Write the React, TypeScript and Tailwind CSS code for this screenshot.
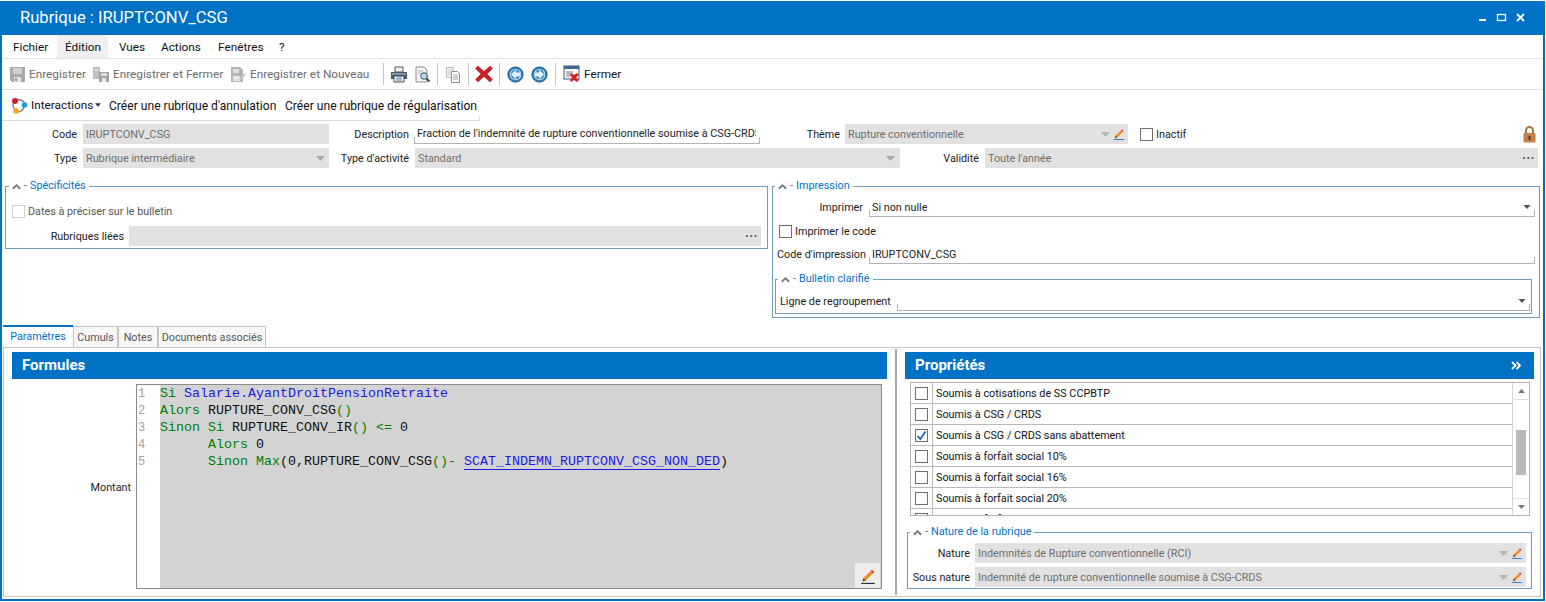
import React from "react";

const Floppy = () => (
  <svg width="17" height="17" viewBox="0 0 17 17"><path d="M1 1h15v15H3l-2-2z" fill="#a9a9a9" /><rect x="4" y="2" width="9" height="6" fill="#cfcfcf" /><rect x="5" y="11" width="7" height="5" fill="#e4e4e4" /><rect x="6" y="12" width="2" height="3" fill="#9a9a9a" /></svg>
);
const FloppyDoc = () => (
  <svg width="18" height="17" viewBox="0 0 18 17"><rect x="1" y="1" width="7" height="12" fill="#bdbdbd" /><rect x="3" y="3" width="3" height="2" fill="#e2e2e2" /><path d="M7 6h10v10H7z" fill="#a3a3a3" /><rect x="9" y="7" width="6" height="3" fill="#dcdcdc" /><rect x="10" y="12" width="4" height="4" fill="#e6e6e6" /></svg>
);
const FloppyNew = () => (
  <svg width="18" height="17" viewBox="0 0 18 17"><path d="M2 1h9l3 3v12H2z" fill="#b4b4b4" /><rect x="4" y="3" width="6" height="4" fill="#dedede" /><rect x="4" y="10" width="7" height="5" fill="#e8e8e8" /><path d="M11 12l5-5 1 1-5 6h-2z" fill="#c8c8c8" /></svg>
);
const Printer = () => (
  <svg width="18" height="17" viewBox="0 0 18 17"><path d="M5 1h8v5H5z" fill="#f4f4f4" stroke="#555" /><path d="M1 6h16v7H1z" fill="#4f5a65" /><rect x="2" y="7" width="14" height="2" fill="#7d95aa" /><path d="M4 10h10v6H4z" fill="#fff" stroke="#445" /><path d="M6 12h6M6 14h6" stroke="#2f7fc0" /></svg>
);
const Preview = () => (
  <svg width="17" height="17" viewBox="0 0 17 17"><path d="M2 1h8l3 3v12H2z" fill="#f3f3f3" stroke="#8a8a8a" /><path d="M4 5h5M4 7h3" stroke="#b5b5b5" /><circle cx="10" cy="10" r="3.2" fill="#b9dcf3" stroke="#5d6f7d" strokeWidth="1.2" /><path d="M12.5 12.5l3 3" stroke="#394650" strokeWidth="2" /></svg>
);
const CopyDoc = () => (
  <svg width="17" height="17" viewBox="0 0 17 17"><path d="M1.5 1.5h7v10h-7z" fill="#f0f0f0" stroke="#bdbdbd" /><path d="M3 4h4M3 6h4M3 8h4" stroke="#d0d0d0" /><path d="M6.5 5.5h6l2 2v9h-8z" fill="#fff" stroke="#8f8f8f" /><path d="M8 9h5M8 11h5M8 13h5" stroke="#a5a5a5" /></svg>
);
const RedX = () => (
  <svg width="18" height="18" viewBox="0 0 18 18"><path d="M3 1l6 5.5L15 1l2.5 2.5L12 9l5.5 5.5L15 17l-6-5.5L3 17 .5 14.5 6 9 .5 3.5z" fill="#cf1f25" stroke="#a8151a" strokeWidth="0.5" /></svg>
);
const Arrow = ({ right }: { right?: boolean }) => (
  <svg width="17" height="17" viewBox="0 0 17 17"><circle cx="8.5" cy="8.5" r="7.6" fill="#2a77b5" stroke="#1b5d93" /><circle cx="8.5" cy="8.5" r="5.8" fill="#dcecf8" /><circle cx="8.5" cy="8.5" r="5" fill="#3f90cc" />{right ? <path d="M4 6.5h4V3.8l5 4.7-5 4.7v-2.7H4z" fill="#e6f1fa" /> : <path d="M13 6.5H9V3.8L4 8.5l5 4.7v-2.7h4z" fill="#e6f1fa" />}</svg>
);
const CloseWin = () => (
  <svg width="18" height="18" viewBox="0 0 18 18"><rect x="1" y="1" width="15" height="13" fill="#fff" stroke="#3c5a78" /><rect x="1" y="1" width="15" height="3" fill="#3c6a97" /><path d="M3 7h7M3 9h5M3 11h4" stroke="#777" /><path d="M8 8l3 2 3-2 2 2-3 2.5 3 2.5-2 2-3-2-3 2-1-2 2-2.5-2-2.5z" fill="#d3262b" /></svg>
);
const Interactions = () => (
  <svg width="17" height="17" viewBox="0 0 17 17"><path d="M4 4C8 1 14 4 14 8M13 10c-1 4-5 6-8 4M4 12C1 10 2 7 3 5" fill="none" stroke="#6b7280" strokeWidth="1.2" /><circle cx="4" cy="4" r="3" fill="#d5212e" /><circle cx="13.5" cy="8" r="2.8" fill="#1f9fd8" /><circle cx="5" cy="14" r="2.8" fill="#f0a820" /></svg>
);
const Pencil = ({ line = "#1e6fb5", size = 14 }: { line?: string; size?: number }) => (
  <svg width={size} height={size} viewBox="0 0 14 14"><path d="M3 9l6.5-6.5 2 2L5 11l-2.8.8z" fill="#ee8a1d" /><path d="M9.5 2.500l1-1 2 2-1 1z" fill="#d9333a" /><path d="M2.200 11.800L3 9l2 2z" fill="#6b4a2b" /><rect x="1" y="13" width="12" height="1" fill={line} /></svg>
);
const Lock = () => (
  <svg width="13" height="17" viewBox="0 0 13 17"><path d="M3 7V4.500a3.500 3.500 0 0 1 7 0V7" fill="none" stroke="#a9743f" strokeWidth="2" /><rect x="0.500" y="7" width="12" height="9.500" rx="1" fill="#c0824a" /><rect x="5.500" y="10" width="2" height="4" fill="#5f3c1c" /></svg>
);
const Caret = ({ color = "#a8a8a8", w = 9, h = 5 }: { color?: string; w?: number; h?: number }) => (
  <svg width={w} height={h} viewBox="0 0 9 5"><path d="M0 0h9L4.500 5z" fill={color} /></svg>
);
const Chevron = () => (
  <svg width="9" height="7" viewBox="0 0 10 7"><path d="M1 6l4-4 4 4" fill="none" stroke="#6d7780" strokeWidth="2" /></svg>
);
const Sep = ({ ml }: { ml: string }) => <div className={`h-[22px] w-px bg-[#c4c4c4] ${ml}`} />;
const Dots = () => <span className="text-[#444] text-[12px] leading-[14px] pb-[6px] font-bold tracking-[0.8px]">...</span>;

const GrayField = ({ w, children, right }: { w: string; children?: React.ReactNode; right?: React.ReactNode }) => (
  <div className={`${w} h-5 bg-[#e1e1e1] flex items-center justify-between pl-[3px] pr-[3px] text-[#6e6e6e] shrink-0`}>
    <span className="pt-[2px]">{children}</span>
    {right}
  </div>
);

const LineField = ({ w, children, right, cls = "" }: { w: string; children?: React.ReactNode; right?: React.ReactNode; cls?: string }) => (
  <div className={`${w} ${cls} relative border-b border-[#b4b4b4] flex items-center justify-between pl-[3px] pr-[4px] shrink-0 text-[#222]`}>
    <span className="absolute left-0 bottom-0 h-[6px] w-px bg-[#b4b4b4]" />
    <span className="absolute right-0 bottom-0 h-[6px] w-px bg-[#b4b4b4]" />
    <span className="overflow-hidden pt-[2px]">{children}</span>
    {right}
  </div>
);

const Check = ({ dim, checked }: { dim?: boolean; checked?: boolean }) => (
  <div className={`w-[13px] h-[13px] border bg-white shrink-0 flex items-center justify-center ${dim ? "border-[#cfcfcf]" : "border-[#6f6f6f]"}`}>
    {checked && <svg width="11" height="11" viewBox="0 0 11 11"><path d="M1.500 6l2.800 3L9.500 1.500" fill="none" stroke="#1668b5" strokeWidth="1.800" /></svg>}
  </div>
);

const Legend = ({ children }: { children: React.ReactNode }) => (
  <legend className="ml-[-2px] px-[3px] flex items-center gap-[3px] text-[#0072c6] leading-[14px]">
    <Chevron /><span className="text-[#5d6770]">-</span><span>{children}</span>
  </legend>
);

const Tab = ({ w, children, active }: { w: string; children: React.ReactNode; active?: boolean }) => (
  <div className={`${w} flex items-center justify-center ${active ? "h-[23px] border-t-2 border-[#0072c6] text-[#0072c6] bg-white mb-[-1px]" : "h-[21px] pt-[2px] border border-b-0 border-[#c4c4c4] bg-[#f7f7f7] text-[#555]"}`}>{children}</div>
);

const props = ["Soumis à cotisations de SS CCPBTP", "Soumis à CSG / CRDS", "Soumis à CSG / CRDS sans abattement", "Soumis à forfait social 10%", "Soumis à forfait social 16%", "Soumis à forfait social 20%", "Soumis à forfait social"];

const G = ({ children }: { children: React.ReactNode }) => <span className="text-[#008000]">{children}</span>;
const B = ({ children }: { children: React.ReactNode }) => <span className="text-[#1a1ae0]">{children}</span>;
const K = ({ children }: { children: React.ReactNode }) => <span className="text-[#111]">{children}</span>;

export default function App() {
  return (
    <div className="w-[1546px] h-[602px] pt-px bg-white font-[family-name:Roboto] text-[10.8px] text-[#1c1c1c] whitespace-nowrap overflow-hidden">
      <div className="w-[1545px] h-[600px] border-2 border-t-0 border-[#0072c6] flex flex-col">
        {/* Title */}
        <div className="h-[34px] shrink-0 bg-[#0072c6] flex items-center justify-between text-white pl-[18px] pr-[16px]">
          <span className="text-[16.6px]">Rubrique : IRUPTCONV_CSG</span>
          <svg width="48" height="10" viewBox="0 0 48 10">
            <rect x="0" y="6" width="7" height="2" fill="#fff" />
            <rect x="18.500" y="1.500" width="8" height="6" fill="none" stroke="#fff" strokeWidth="1.300" />
            <path d="M38 1l7 7M45 1l-7 7" stroke="#fff" strokeWidth="1.800" />
          </svg>
        </div>
        {/* Menu */}
        <div className="h-[24px] shrink-0 flex items-center border-b border-[#e4e4e4] text-[#111] text-[11.8px]">
          <span className="ml-[11px] w-[44px] pt-[2px]">Fichier</span>
          <span className="h-[23px] pl-[8px] pt-[2px] w-[51px] bg-[#f0f0f0] flex items-center">Édition</span>
          <span className="ml-[11px] w-[42px] pt-[2px]">Vues</span>
          <span className="w-[57px] pt-[2px]">Actions</span>
          <span className="w-[61px] pt-[2px]">Fenêtres</span>
          <span className="pt-[2px]">?</span>
        </div>
        {/* Toolbar */}
        <div className="h-[31px] shrink-0 flex items-center border-b border-[#e0e0e0] text-[#6c6c6c] text-[11.8px]">
          <div className="ml-[7px] w-[20px]"><Floppy /></div>
          <span className="w-[63px] pt-[2px]">Enregistrer</span>
          <div className="w-[21px]"><FloppyDoc /></div>
          <span className="w-[116px] pt-[2px]">Enregistrer et Fermer</span>
          <div className="w-[21px]"><FloppyNew /></div>
          <span className="w-[133px] pt-[2px]">Enregistrer et Nouveau</span>
          <Sep ml="" />
          <div className="ml-[6px]"><Printer /></div>
          <div className="ml-[6px]"><Preview /></div>
          <Sep ml="ml-[6px]" />
          <div className="ml-[7px]"><CopyDoc /></div>
          <Sep ml="ml-[6px]" />
          <div className="ml-[6px]"><RedX /></div>
          <Sep ml="ml-[6px]" />
          <div className="ml-[7px]"><Arrow /></div>
          <div className="ml-[7px]"><Arrow right /></div>
          <Sep ml="ml-[7px]" />
          <div className="ml-[7px]"><CloseWin /></div>
          <span className="ml-[3px] pt-[2px] text-[#111]">Fermer</span>
        </div>
        {/* Second toolbar */}
        <div className="h-[31px] shrink-0 w-[478px] relative flex items-center border-b border-[#dcdcdc] text-[#111] text-[12.1px]">
          <span className="absolute right-0 bottom-0 h-[4px] w-px bg-[#dcdcdc]" />
          <div className="ml-[9px]"><Interactions /></div>
          <span className="ml-[3px] w-[64px] pt-[2px] text-[11.8px]">Interactions</span>
          <div className="w-[14px]"><Caret color="#333" w={6} h={4} /></div>
          <span className="w-[176px] pt-[2px]">Créer une rubrique d'annulation</span>
          <span className="pt-[2px]">Créer une rubrique de régularisation</span>
        </div>
        {/* Row 1 */}
        <div className="mt-[3px] h-5 shrink-0 flex items-center">
          <span className="w-[75px] pt-[2px] text-right shrink-0">Code</span>
          <div className="w-[6px]" />
          <GrayField w="w-[246px]">IRUPTCONV_CSG</GrayField>
          <span className="w-[80px] pt-[2px] text-right shrink-0">Description</span>
          <div className="w-[5px]" />
          <LineField w="w-[346px]" cls="h-5">Fraction de l'indemnité de rupture conventionnelle soumise à CSG-CRDS</LineField>
          <span className="w-[80px] pt-[2px] text-right shrink-0 mr-[5px]">Thème</span>
          <GrayField w="w-[283px]" right={<span className="flex items-center gap-[3px]"><Caret color="#b5b5b5" /><Pencil size={12} /></span>}>Rupture conventionnelle</GrayField>
          <div className="ml-[12px]"><Check /></div>
          <span className="ml-[3px] pt-[2px] w-[32px]">Inactif</span>
          <div className="ml-[335px]"><Lock /></div>
        </div>
        {/* Row 2 */}
        <div className="mt-1 h-5 shrink-0 flex items-center">
          <span className="w-[75px] pt-[2px] text-right shrink-0">Type</span>
          <div className="w-[6px]" />
          <GrayField w="w-[246px]" right={<span className="mr-px"><Caret /></span>}>Rubrique intermédiaire</GrayField>
          <span className="w-[80px] pt-[2px] text-right shrink-0">Type d'activité</span>
          <div className="w-[6px]" />
          <GrayField w="w-[485px]" right={<span className="mr-[2px]"><Caret /></span>}>Standard</GrayField>
          <span className="w-[79px] pt-[2px] text-right shrink-0 mr-[6px]">Validité</span>
          <GrayField w="w-[553px]" right={<Dots />}>Toute l'année</GrayField>
        </div>
        {/* Groups */}
        <div className="mt-[11px] h-[140px] shrink-0 flex items-start">
          <fieldset className="ml-[3px] w-[763px] h-[70px] border border-[#6f9fbd] px-[5px] min-w-0">
            <Legend>Spécificités</Legend>
            <div className="mt-[9px] ml-px flex items-center gap-[3px] text-[#555]"><Check dim /><span className="pt-[2px]">Dates à préciser sur le bulletin</span></div>
            <div className="mt-[6px] flex items-center">
              <span className="w-[113px] pt-[2px] text-right shrink-0 mr-[5px]">Rubriques liées</span>
              <GrayField w="w-[632px]" right={<Dots />} />
            </div>
          </fieldset>
          <fieldset className="ml-[4px] w-[768px] h-[139px] border border-[#6f9fbd] px-[4px] min-w-0">
            <Legend>Impression</Legend>
            <div className="mt-[5px] flex items-center h-[19px]">
              <span className="w-[86px] pt-[2px] text-right shrink-0 mr-[6px]">Imprimer</span>
              <LineField w="w-[666px]" cls="h-[19px]" right={<Caret color="#555" w={8} h={4} />}>Si non nulle</LineField>
            </div>
            <div className="mt-[5px] flex items-center gap-[3px] ml-[2px]"><Check /><span className="pt-[2px]">Imprimer le code</span></div>
            <div className="mt-[4px] flex items-center h-5">
              <span className="w-[86px] pt-[2px] text-right shrink-0 mr-[6px]">Code d'impression</span>
              <LineField w="w-[666px]" cls="h-5">IRUPTCONV_CSG</LineField>
            </div>
            <fieldset className="mt-[8px] ml-[-2px] w-[757px] h-[42px] border border-[#6f9fbd] px-[4px] min-w-0">
              <Legend>Bulletin clarifié</Legend>
              <div className="mt-[5px] flex items-center h-5">
                <span className="w-[112px] pt-[2px] shrink-0 mr-[5px]">Ligne de regroupement</span>
                <LineField w="w-[633px]" cls="h-5" right={<Caret color="#555" w={8} h={4} />} />
              </div>
            </fieldset>
          </fieldset>
        </div>
        {/* Tabs */}
        <div className="mt-[5px] h-[23px] shrink-0 ml-px flex items-end">
          <Tab w="w-[70px]" active>Paramètres</Tab>
          <Tab w="w-[45px]">Cumuls</Tab>
          <Tab w="w-[40px]">Notes</Tab>
          <Tab w="w-[108px]">Documents associés</Tab>
        </div>
        {/* Tab panel */}
        <div className="ml-px mr-[2px] h-[250px] shrink-0 border border-[#c4c4c4] flex pt-[4px] px-[8px]">
          {/* Formules */}
          <div className="w-[875px] shrink-0 flex flex-col">
            <div className="h-[27px] bg-[#0072c6] text-white font-bold text-[15px] flex items-center pl-[10px] shrink-0">Formules</div>
            <div className="mt-[5px] flex h-[205px]">
              <span className="w-[119px] shrink-0 text-right self-center mr-[5px] mt-[4px]">Montant</span>
              <div className="w-[746px] border border-[#8a8a8a] flex relative">
                <div className="w-[23px] bg-white shrink-0 font-[family-name:Liberation_Mono] text-[12px] leading-[17px] text-[#a0a0a0] pt-[1px] pl-[1px]">
                  <div>1</div><div>2</div><div>3</div><div>4</div><div>5</div>
                </div>
                <div className="flex-1 bg-[#d3d3d3] font-[family-name:Liberation_Mono] text-[13.33px] leading-[17px] whitespace-pre">
                  <div><G>Si </G><B>Salarie.AyantDroitPensionRetraite</B></div>
                  <div><G>Alors </G><K>RUPTURE_CONV_CSG</K><G>()</G></div>
                  <div><G>Sinon Si </G><K>RUPTURE_CONV_IR</K><G>() &lt;= </G><K>0</K></div>
                  <div><G>      Alors </G><K>0</K></div>
                  <div><G>      Sinon Max</G><K>(0,RUPTURE_CONV_CSG</K><G>()- </G><span className="inline-block leading-[14px] border-b-[1.5px] border-[#1a1ae0] text-[#1a1ae0]">SCAT_INDEMN_RUPTCONV_CSG_NON_DED</span><K>)</K></div>
                </div>
                <div className="absolute right-[1px] bottom-[0px] w-[25px] h-[25px] bg-[#ededed] flex items-center justify-center">
                  <Pencil line="#333" size={16} />
                </div>
              </div>
            </div>
          </div>
          {/* Splitter */}
          <div className="ml-[8px] mt-[-3px] w-[2px] h-[246px] bg-[#a9a9a9] shrink-0" />
          {/* Propriétés */}
          <div className="ml-[8px] w-[629px] shrink-0 flex flex-col">
            <div className="h-[27px] bg-[#0072c6] text-white font-bold text-[15px] flex items-center justify-between pl-[10px] pr-[13px] shrink-0">
              <span>Propriétés</span>
              <svg width="10" height="9" viewBox="0 0 10 9"><path d="M1 1l3.500 3.500L1 8M5.500 1L9 4.500 5.500 8" fill="none" stroke="#fff" strokeWidth="1.800" /></svg>
            </div>
            <div className="mt-[3px] ml-[5px] w-[620px] h-[134px] border border-[#b4b4b4] flex overflow-hidden shrink-0">
              <div className="flex-1 min-w-0 overflow-hidden">
                {props.map((p, i) => (
                  <div key={p} className="h-[21px] flex border-b border-[#b9b9b9] text-[#111]">
                    <div className="w-[22px] border-r border-[#b9b9b9] flex items-center justify-center shrink-0"><Check checked={i === 2} /></div>
                    <span className="ml-[3px] leading-[22px]">{p}</span>
                  </div>
                ))}
              </div>
              <div className="w-[17px] border-l border-[#d5d5d5] shrink-0 flex flex-col items-center">
                <div className="h-[17px] w-full flex items-center justify-center border-b border-[#e0e0e0]"><svg width="7" height="4" viewBox="0 0 7 4"><path d="M0 4h7L3.500 0z" fill="#777" /></svg></div>
                <div className="mt-[30px] w-[10px] h-[45px] bg-[#b9b9b9]" />
                <div className="mt-auto h-[17px] w-full flex items-center justify-center border-t border-[#e0e0e0]"><svg width="7" height="4" viewBox="0 0 7 4"><path d="M0 0h7L3.500 4z" fill="#777" /></svg></div>
              </div>
            </div>
            <fieldset className="mt-[9px] ml-[2px] w-[625px] h-[64px] border border-[#6f9fbd] px-[4px] min-w-0 shrink-0">
              <Legend>Nature de la rubrique</Legend>
              <div className="mt-[4px] flex items-center">
                <span className="w-[58px] pt-[2px] text-right shrink-0 mr-[5px]">Nature</span>
                <GrayField w="w-[551px]" right={<span className="flex items-center gap-[3px]"><Caret color="#b5b5b5" /><Pencil size={12} /></span>}>Indemnités de Rupture conventionnelle (RCI)</GrayField>
              </div>
              <div className="mt-[4px] flex items-center">
                <span className="w-[58px] pt-[2px] text-right shrink-0 mr-[5px]">Sous nature</span>
                <GrayField w="w-[551px]" right={<span className="flex items-center gap-[3px]"><Caret color="#b5b5b5" /><Pencil size={12} /></span>}>Indemnité de rupture conventionnelle soumise à CSG-CRDS</GrayField>
              </div>
            </fieldset>
          </div>
        </div>
      </div>
    </div>
  );
}
